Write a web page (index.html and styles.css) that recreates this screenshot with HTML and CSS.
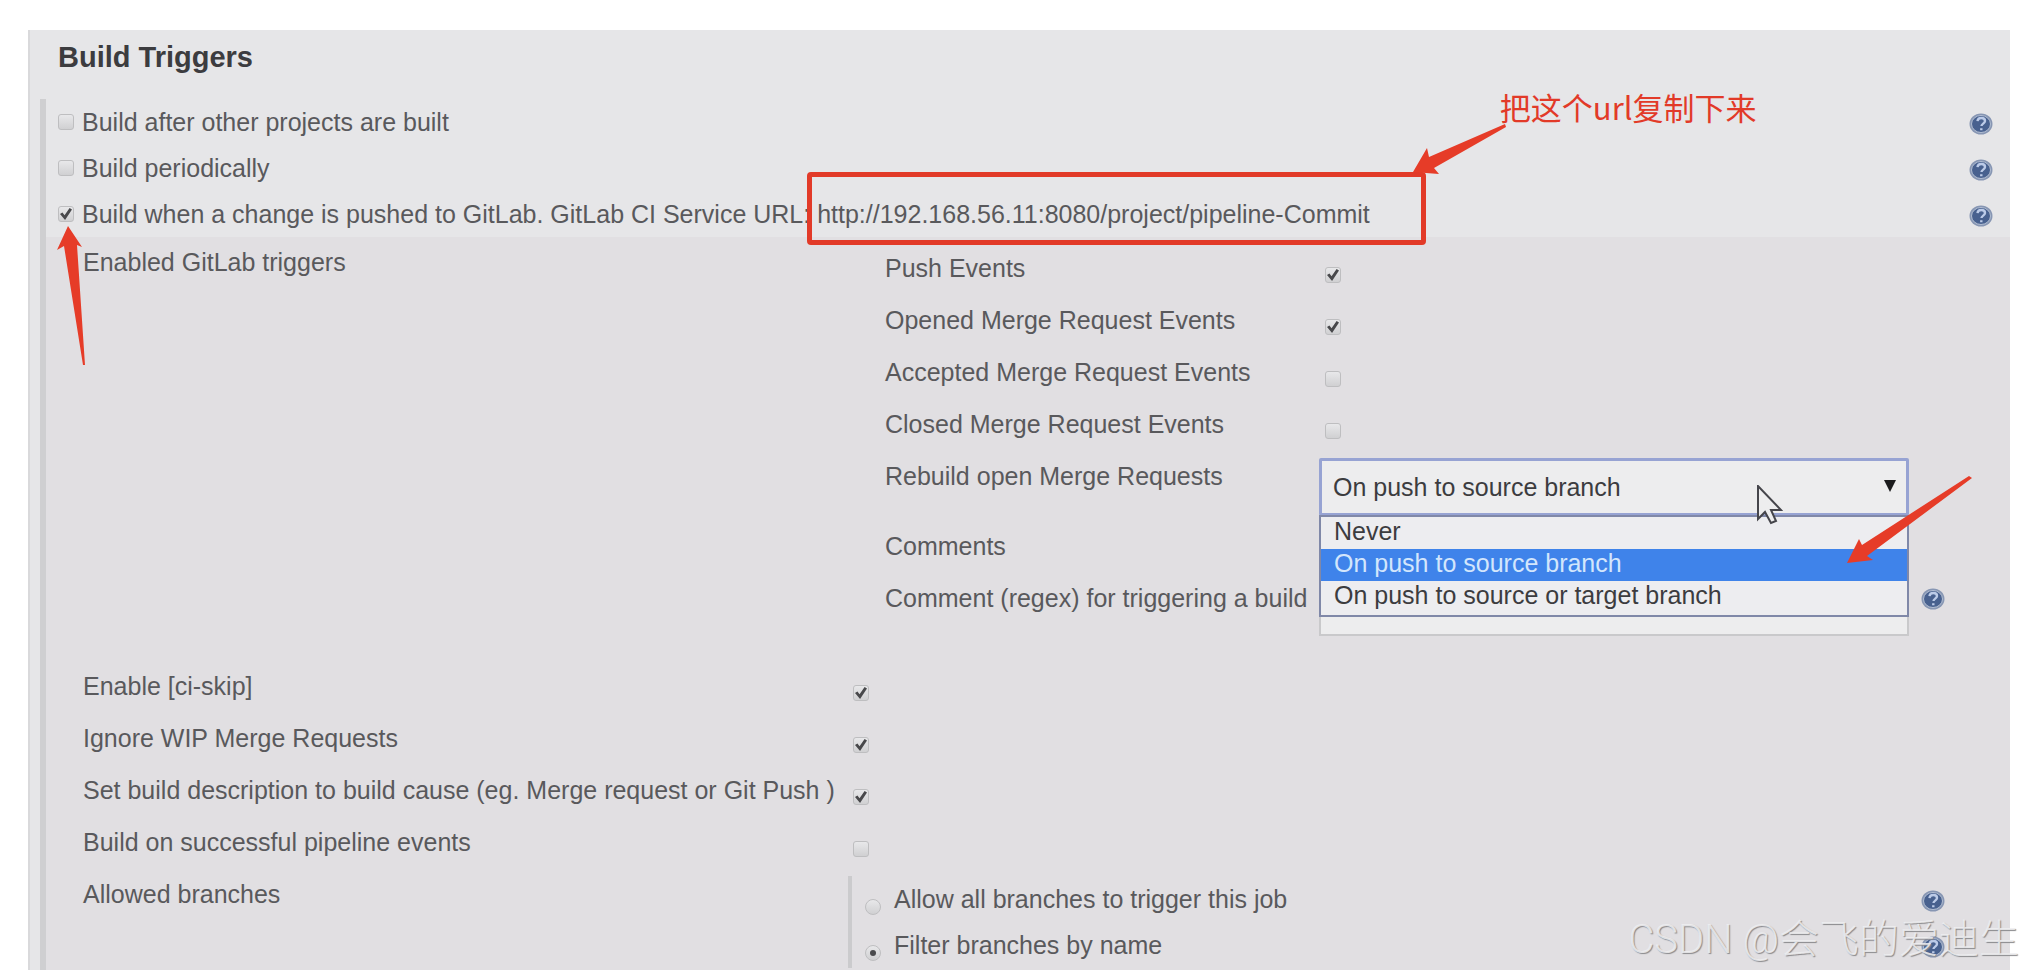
FILE: index.html
```html
<!DOCTYPE html>
<html lang="en">
<head>
    <meta charset="UTF-8">
    <title>Build Triggers</title>
    <link rel="stylesheet" href="styles.css">
</head>
<body>
    <!-- shared help icon -->
    <svg class="defs" width="0" height="0" aria-hidden="true">
        <symbol id="help-icon" viewBox="0 0 24 22">
            <ellipse cx="12" cy="11" rx="11.5" ry="10.5" fill="#8796b3"/>
            <ellipse cx="12" cy="11" rx="9.5" ry="8.5" fill="#48618f" stroke="#b3bfd3" stroke-width="1"/>
            <path d="M8.5 8.2c.2-2.2 1.8-3.2 3.8-3.2 2.2 0 3.7 1.2 3.7 3 0 2.6-3.5 2.6-3.5 5M12.3 15.2v2" fill="none" stroke="#bccbe8" stroke-width="2.4"/>
        </symbol>
    </svg>

    <main class="panel">
        <h2>Build Triggers</h2>

        <form class="triggers">
            <div class="trigger">
                <input type="checkbox" id="after-other">
                <label for="after-other">Build after other projects are built</label>
                <button type="button" class="help" aria-label="Help"><svg><use href="#help-icon"/></svg></button>
            </div>
            <div class="trigger">
                <input type="checkbox" id="periodically">
                <label for="periodically">Build periodically</label>
                <button type="button" class="help" aria-label="Help"><svg><use href="#help-icon"/></svg></button>
            </div>
            <div class="trigger">
                <input type="checkbox" id="gitlab-push" checked>
                <label for="gitlab-push">Build when a change is pushed to GitLab. GitLab CI Service URL: <span class="url">http://192.168.56.11:8080/project/pipeline-Commit<span class="note">把这个url复制下来</span><svg class="arrow arrow-url" viewBox="0 0 94 50"><path d="M0 48L14 24L16 33L92 0L93 3L21 44L26 50Z"/></svg></span></label>
                <svg class="arrow arrow-check" viewBox="0 0 30 140"><path d="M11 0L0 24L7 20L26 139H28L20 19L25 21Z"/></svg>
                <button type="button" class="help" aria-label="Help"><svg><use href="#help-icon"/></svg></button>
            </div>

            <div class="settings">
                <div class="row">
                    <span class="name">Enabled GitLab triggers</span>
                    <div class="events">
                        <div class="event">
                            <label for="push">Push Events</label>
                            <input type="checkbox" id="push" checked>
                        </div>
                        <div class="event">
                            <label for="opened">Opened Merge Request Events</label>
                            <input type="checkbox" id="opened" checked>
                        </div>
                        <div class="event">
                            <label for="accepted">Accepted Merge Request Events</label>
                            <input type="checkbox" id="accepted">
                        </div>
                        <div class="event">
                            <label for="closed">Closed Merge Request Events</label>
                            <input type="checkbox" id="closed">
                        </div>
                        <div class="event">
                            <label for="rebuild">Rebuild open Merge Requests</label>
                            <div class="dropdown">
                                <select id="rebuild">
                                    <option>Never</option>
                                    <option selected>On push to source branch</option>
                                    <option>On push to source or target branch</option>
                                </select>
                                <ul class="options">
                                    <li>Never</li>
                                    <li class="active">On push to source branch</li>
                                    <li>On push to source or target branch</li>
                                </ul>
                                <svg class="cursor" viewBox="0 0 26 40"><path d="M1 1V34L8 27L14 38L19 36L14 25H24Z"/></svg>
                                <svg class="arrow arrow-option" viewBox="0 0 126 88"><path d="M0 87L12 63L15 69L122 0L125 2L20 80L26 84Z"/></svg>
                            </div>
                        </div>
                        <div class="event">
                            <span>Comments</span>
                        </div>
                        <div class="event">
                            <label for="regex">Comment (regex) for triggering a build</label>
                            <textarea id="regex"></textarea>
                            <button type="button" class="help" aria-label="Help"><svg><use href="#help-icon"/></svg></button>
                        </div>
                    </div>
                </div>
                <div class="row">
                    <label class="name" for="ci-skip">Enable [ci-skip]</label>
                    <input type="checkbox" id="ci-skip" checked>
                </div>
                <div class="row">
                    <label class="name" for="ignore-wip">Ignore WIP Merge Requests</label>
                    <input type="checkbox" id="ignore-wip" checked>
                </div>
                <div class="row">
                    <label class="name" for="description">Set build description to build cause (eg. Merge request or Git Push )</label>
                    <input type="checkbox" id="description" checked>
                </div>
                <div class="row">
                    <label class="name" for="pipeline-events">Build on successful pipeline events</label>
                    <input type="checkbox" id="pipeline-events">
                </div>
                <div class="row">
                    <span class="name">Allowed branches</span>
                    <div class="branches">
                        <div class="branch">
                            <input type="radio" name="branches" id="all-branches">
                            <label for="all-branches">Allow all branches to trigger this job</label>
                            <button type="button" class="help" aria-label="Help"><svg><use href="#help-icon"/></svg></button>
                        </div>
                        <div class="branch">
                            <input type="radio" name="branches" id="filter-name" checked>
                            <label for="filter-name">Filter branches by name</label>
                            <button type="button" class="help" aria-label="Help"><svg><use href="#help-icon"/></svg></button>
                        </div>
                    </div>
                </div>
            </div>
        </form>
    </main>

    <div class="watermark">CSDN @会飞的爱迪生</div>
</body>
</html>
```

FILE: styles.css
```css
* {
    box-sizing: border-box;
}

body {
    margin: 0;
    padding: 30px 12px 6px 28px;
    background: #fff;
    color: #59595c;
    font-family: "Liberation Sans", Arial, "Noto Sans CJK SC", sans-serif;
    font-size: 25px;
    line-height: 30px;
    position: relative;
}

.defs {
    position: absolute;
}

.panel {
    background: #e6e6e8;
    border-left: 2px solid #d9d9db;
    padding: 11px 0 0 10px;
}

h2 {
    margin: 0 0 26px 18px;
    font-size: 29px;
    line-height: 32px;
    color: #3c3c3f;
}

.triggers {
    border-left: 6px solid #cfcfd1;
}

.trigger {
    display: flex;
    align-items: center;
    height: 46px;
    padding: 0 17px 0 12px;
    position: relative;
}

.trigger label {
    margin-left: 8px;
}

/* form controls */

input {
    appearance: none;
    flex: none;
    width: 16px;
    height: 16px;
    margin: 0;
    border: 1px solid #bebec0;
    border-radius: 3px;
    background: linear-gradient(#e8e8ea, #d0d0d2);
    position: relative;
}

input[type="checkbox"]:checked::after {
    content: "";
    position: absolute;
    inset: 1px;
    background: #48484b;
    clip-path: polygon(0 50%, 20% 38%, 38% 60%, 80% 0, 100% 12%, 42% 100%);
}

input[type="radio"] {
    border-radius: 50%;
}

input[type="radio"]:checked::after {
    content: "";
    position: absolute;
    inset: 4px;
    border-radius: 50%;
    background: #4a4a4d;
}

.help {
    flex: none;
    width: 24px;
    height: 22px;
    margin: 4px 0 0 auto;
    padding: 0;
    border: 0;
    background: none;
}

.help svg {
    display: block;
    width: 24px;
    height: 22px;
}

/* gitlab settings */

.settings {
    background: #e1dfe2;
    padding: 5px 65px 2px 37px;
}

.row {
    display: grid;
    grid-template-columns: 770fr 1092fr;
    min-height: 52px;
}

.name {
    padding-top: 11px;
    white-space: nowrap;
}

.row > input,
.event > input {
    margin-top: 25px;
}

.row:first-child > .name {
    padding-top: 5px;
}

.events {
    padding: 0 0 24px 32px;
}

.event {
    display: grid;
    grid-template-columns: 434fr 590fr 36px;
    min-height: 52px;
}

.event > label,
.event > span {
    padding-top: 11px;
    white-space: nowrap;
}

.event > input {
    margin-left: 6px;
}

.event > .help {
    margin-top: 16px;
}

.dropdown {
    position: relative;
    margin: 8px 0 4px;
}

.dropdown::after {
    content: "";
    position: absolute;
    top: 22px;
    right: 13px;
    border: 6px solid transparent;
    border-top: 12px solid #1b1b1d;
    border-bottom: 0;
}

select {
    appearance: none;
    display: block;
    width: 100%;
    height: 58px;
    padding: 0 11px;
    border: 3px solid #97a3d3;
    border-radius: 2px;
    background: #ededee;
    color: #3c3c3f;
    font: inherit;
}

textarea {
    display: block;
    width: 100%;
    height: 56px;
    margin-top: 8px;
    border: 2px solid #c9c9cb;
    background: #ededee;
    resize: none;
}

.options {
    position: absolute;
    z-index: 1;
    top: 57px;
    left: 0;
    right: 0;
    margin: 0;
    padding: 0 0 2px;
    border: 2px solid #8088a8;
    background: #ededf0;
    color: #3c3c3f;
    line-height: 28px;
    list-style: none;
}

.options li {
    height: 32px;
    padding-left: 13px;
}

.options .active {
    background: #3f83ea;
    color: #d3e6fc;
}

.branches {
    margin: 8px 0 0 -5px;
    border-left: 4px solid #cbcbcd;
}

.branch {
    display: flex;
    align-items: center;
    height: 46px;
    padding-left: 13px;
}

.branch input {
    margin-top: 16px;
}

.branch label {
    margin-left: 13px;
}

/* red marks */

.url {
    position: relative;
}

.url::before {
    content: "";
    position: absolute;
    inset: -28px -56px -17px -10px;
    border: 5px solid #e23a28;
    border-radius: 4px;
}

.note {
    position: absolute;
    left: 100%;
    bottom: 100%;
    margin: 0 0 78px 130px;
    color: #e23a28;
    font-family: "Noto Sans CJK SC", sans-serif;
    font-size: 31px;
    white-space: nowrap;
}

.arrow {
    position: absolute;
    z-index: 2;
    fill: #e63c28;
}

.arrow-url {
    top: -76px;
    right: -137px;
    width: 94px;
    height: 50px;
}

.arrow-check {
    top: 35px;
    left: 11px;
    width: 30px;
    height: 140px;
}

.arrow-option {
    top: 18px;
    right: -64px;
    width: 126px;
    height: 88px;
}

.cursor {
    position: absolute;
    z-index: 2;
    top: 27px;
    right: 126px;
    width: 26px;
    height: 40px;
    fill: #ededee;
    stroke: #45454b;
    stroke-width: 2;
}

.watermark {
    position: absolute;
    z-index: 3;
    right: 3px;
    bottom: 16px;
    color: rgba(240, 240, 242, 0.85);
    font-family: Roboto, "Noto Sans CJK SC", sans-serif;
    font-size: 40px;
    font-weight: 300;
    line-height: 40px;
    text-shadow: 1px 1px 1px #8a8a8d;
}
```
